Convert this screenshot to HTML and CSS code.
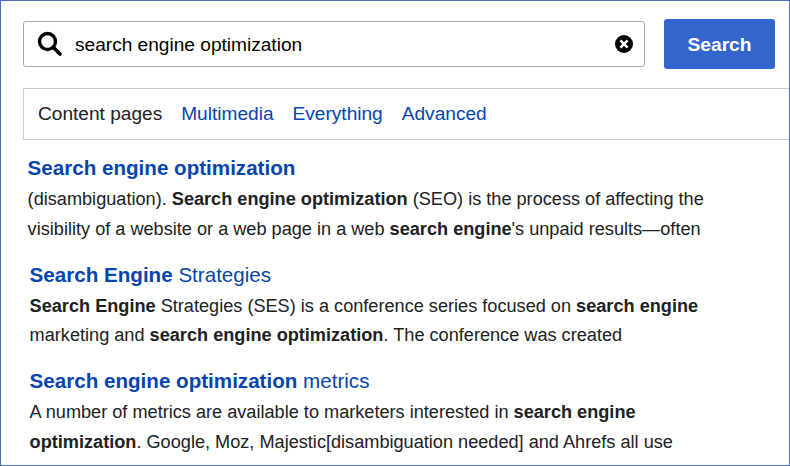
FILE: index.html
```html
<!DOCTYPE html>
<html lang="en">
<head>
    <meta charset="UTF-8">
    <meta name="viewport" content="width=device-width, initial-scale=1.0">
    <title>Search engine optimization - Search</title>
    <link rel="stylesheet" href="styles.css">
</head>
<body>
    <div class="frame">
        <form class="search-bar">
            <div class="search-input">
                <svg class="search-icon" width="26" height="26" viewBox="0 0 26 26">
                    <circle cx="10.5" cy="10.5" r="8" fill="none" stroke="#000" stroke-width="3.4"/>
                    <path d="M16.5 16.5l6.5 6.5" fill="none" stroke="#000" stroke-width="3.8" stroke-linecap="round"/>
                </svg>
                <span class="search-text">search engine optimization</span>
                <svg class="clear-icon" width="18" height="18" viewBox="0 0 18 18">
                    <circle cx="9" cy="9" r="9" fill="#000"/>
                    <path d="M5.4 5.4l7.2 7.2M12.6 5.4l-7.2 7.2" stroke="#fff" stroke-width="2.6"/>
                </svg>
            </div>
            <button class="search-button" type="button">Search</button>
        </form>

        <div class="tabs">
            <span class="tab">Content pages</span>
            <a class="tab link">Multimedia</a>
            <a class="tab link">Everything</a>
            <a class="tab link">Advanced</a>
        </div>

        <div class="results">
            <div class="result first">
                <a class="result-title"><b>Search engine optimization</b></a>
                <p class="snippet">(disambiguation). <b>Search engine optimization</b> (SEO) is the process of affecting the</p>
                <p class="snippet">visibility of a website or a web page in a web <b>search engine</b>'s unpaid results—often</p>
            </div>
            <div class="result">
                <a class="result-title"><b>Search Engine</b> Strategies</a>
                <p class="snippet"><b>Search Engine</b> Strategies (SES) is a conference series focused on <b>search engine</b></p>
                <p class="snippet">marketing and <b>search engine optimization</b>. The conference was created</p>
            </div>
            <div class="result">
                <a class="result-title"><b>Search engine optimization</b> metrics</a>
                <p class="snippet">A number of metrics are available to marketers interested in <b>search engine</b></p>
                <p class="snippet"><b>optimization</b>. Google, Moz, Majestic[disambiguation needed] and Ahrefs all use</p>
            </div>
        </div>
    </div>
</body>
</html>
```

FILE: styles.css
```css
html, body {
    margin: 0;
    padding: 0;
}

body {
    font-family: "Liberation Sans", Arial, sans-serif;
    color: #202122;
    background-color: #fff;
}

.frame {
    box-sizing: border-box;
    width: 790px;
    height: 466px;
    border: 1px solid #4d6bbf;
    padding: 18px 0 0 22px;
    overflow: hidden;
}

.search-bar {
    display: flex;
    align-items: center;
    gap: 19px;
}

.search-input {
    box-sizing: border-box;
    display: flex;
    align-items: center;
    width: 622px;
    height: 46px;
    padding: 0 11px 0 13px;
    border: 1px solid #a2a9b1;
    border-radius: 3px;
}

.search-icon {
    flex: none;
    margin-right: 12px;
}

.search-text {
    flex: 1;
    padding-top: 1px;
    font-size: 19.1px;
    color: #000;
}

.clear-icon {
    flex: none;
}

.search-button {
    width: 111px;
    height: 50px;
    padding: 1px 0 0;
    border: none;
    border-radius: 3px;
    background-color: #3366cc;
    color: #fff;
    font-family: inherit;
    font-size: 19.2px;
    font-weight: bold;
}

.tabs {
    box-sizing: border-box;
    display: flex;
    gap: 19px;
    align-items: center;
    height: 52px;
    margin-top: 19px;
    padding-left: 14px;
    border: 1px solid #c8ccd1;
    border-right: none;
    font-size: 19.1px;
}

.link {
    color: #0645ad;
}

.results {
    padding-top: 12px;
}

.result {
    margin: 0 0 0 6.6px;
    padding-bottom: 14.5px;
}

.result.first {
    margin-left: 4.6px;
}

.result-title {
    display: block;
    margin-bottom: 2px;
    font-size: 20.6px;
    line-height: 31px;
    color: #0645ad;
}

.snippet {
    margin: 0;
    font-size: 18.15px;
    line-height: 29.5px;
    white-space: nowrap;
}
```
